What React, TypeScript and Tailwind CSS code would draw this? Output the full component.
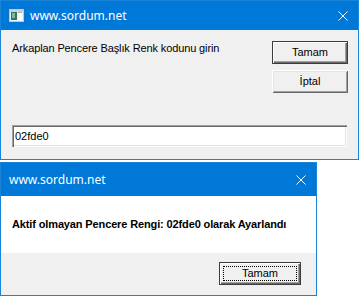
import React from 'react';

const SANS = 'font-["Liberation_Sans",Arial,sans-serif]';
const TITLE = 'font-["Noto_Sans","Liberation_Sans",sans-serif]';

function CloseIcon() {
  return (
    <svg width="10" height="10" viewBox="0 0 10 10" className="block">
      <path d="M0.5 0.5 L9.5 9.5 M9.5 0.5 L0.5 9.5" stroke="#fff" strokeWidth="1" fill="none" />
    </svg>
  );
}

function AppIcon() {
  return (
    <svg width="15" height="13" viewBox="0 0 15 13" className="block">
      <rect x="0.5" y="0.5" width="14" height="12" fill="#f4f4f4" stroke="#c8c8c8" />
      <rect x="1" y="1" width="13" height="2" fill="#d0d0d0" />
      <rect x="2" y="3" width="6" height="8" fill="#2f7a5c" />
      <rect x="3" y="4" width="3" height="5" fill="#7ab8a0" />
      <rect x="9" y="3" width="4" height="8" fill="#ffffff" />
      <rect x="9" y="3" width="4" height="1" fill="#b0b0b0" />
    </svg>
  );
}

function ClassicButton({ label, isDefault }: { label: string; isDefault?: boolean }) {
  return (
    <button
      className={`w-[76px] h-[23px] bg-[#f0f0f0] text-[11px] text-black ${SANS} ${
        isDefault
          ? 'border border-[#3c3c3c] shadow-[inset_1px_1px_0_#ffffff,inset_-1px_-1px_0_#696969,inset_-2px_-2px_0_#a0a0a0]'
          : 'shadow-[inset_1px_1px_0_#ffffff,inset_-1px_-1px_0_#696969,inset_2px_2px_0_#e3e3e3,inset_-2px_-2px_0_#a0a0a0]'
      }`}
    >
      {label}
    </button>
  );
}

export default function App() {
  return (
    <div className="w-[359px] h-[296px] bg-white overflow-hidden flex flex-col">
      {/* input dialog */}
      <div className="h-[160px] border border-[#1a85d8] bg-[#f0f0f0] flex flex-col">
        <div className="h-[29px] bg-[#0078d7] flex items-center pl-[8px] pr-[10px]">
          <AppIcon />
          <span className={`ml-[6px] text-white text-[12px] ${TITLE}`}>www.sordum.net</span>
          <span className="ml-auto">
            <CloseIcon />
          </span>
        </div>
        <div className="flex-1 flex flex-col pl-[11px] pr-[10px] pt-[11px] pb-[12px]">
          <div className="flex justify-between">
            <p className={`text-[11px] leading-[13px] tracking-[-0.12px] text-black mt-[1px] ${SANS}`}>
              Arkaplan Pencere Başlık Renk kodunu girin
            </p>
            <div className="flex flex-col gap-[6px]">
              <ClassicButton label="Tamam" isDefault />
              <ClassicButton label="İptal" />
            </div>
          </div>
          <div
            className={`mt-auto mr-[1px] h-[22px] bg-white flex items-center px-[3px] text-[11px] text-black ${SANS} shadow-[inset_1px_1px_0_#a0a0a0,inset_2px_2px_0_#696969,inset_-1px_-1px_0_#ffffff,inset_-2px_-2px_0_#e3e3e3]`}
          >
            02fde0
          </div>
        </div>
      </div>

      {/* message box */}
      <div className="mt-[2px] w-[317px] flex-1 border border-[#1a85d8] flex flex-col">
        <div className="h-[33px] bg-[#0078d7] flex items-center pl-[8px] pr-[10px]">
          <span className={`text-white text-[12px] ${TITLE}`}>www.sordum.net</span>
          <span className="ml-auto">
            <CloseIcon />
          </span>
        </div>
        <div className="h-[57px] bg-white flex items-center pl-[11px]">
          <p className={`text-[11px] font-bold tracking-[-0.13px] text-black ${SANS}`}>
            Aktif olmayan Pencere Rengi: 02fde0 olarak Ayarlandı
          </p>
        </div>
        <div className="flex-1 bg-[#f0f0f0] flex justify-end items-start pt-[9px] pr-[15px]">
          <button
            className={`w-[82px] h-[23px] p-[3px] flex bg-[#f0f0f0] border border-[#3c3c3c] text-[11px] text-black ${SANS} shadow-[inset_1px_1px_0_#ffffff,inset_-1px_-1px_0_#696969,inset_-2px_-2px_0_#a0a0a0]`}
          >
            <span className="flex-1 flex items-center justify-center border border-dotted border-black">
              Tamam
            </span>
          </button>
        </div>
      </div>
    </div>
  );
}
